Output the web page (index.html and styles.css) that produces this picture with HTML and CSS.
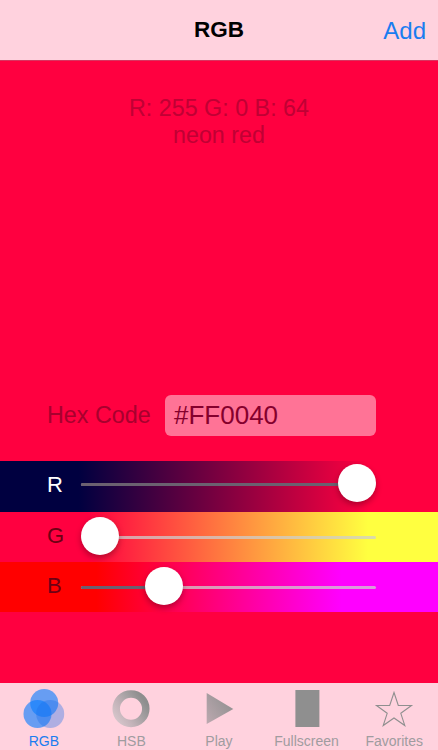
FILE: index.html
```html
<!DOCTYPE html>
<html lang="en">
<head>
<meta charset="utf-8">
<title>RGB</title>
<link rel="stylesheet" href="styles.css">
</head>
<body>
<div class="app">
  <header class="navbar">
    <div class="nav-title">RGB</div>
    <div class="nav-add">Add</div>
  </header>
  <main class="canvas">
    <div class="readout">
      <div>R: 255 G: 0 B: 64</div>
      <div>neon red</div>
    </div>
    <div class="hex-row">
      <span class="hex-label">Hex Code</span>
      <div class="hex-field">#FF0040</div>
    </div>
    <section class="sliders">
      <div class="slider-row row-r">
        <span class="channel channel-light">R</span>
        <div class="track"><div class="fill" style="width:94%"></div><div class="thumb" style="left:257px"></div></div>
      </div>
      <div class="slider-row row-g">
        <span class="channel">G</span>
        <div class="track"><div class="fill" style="width:0"></div><div class="thumb" style="left:-0.5px"></div></div>
      </div>
      <div class="slider-row row-b">
        <span class="channel">B</span>
        <div class="track"><div class="fill" style="width:25%"></div><div class="thumb" style="left:63.5px"></div></div>
      </div>
    </section>
  </main>
  <nav class="tabbar">
    <div class="tab tab-active">
      <svg class="icon" viewBox="0 0 44 44" width="44" height="44">
        <circle cx="22.200" cy="16" r="14" fill="#0a7cff" fill-opacity=".62"/>
        <circle cx="15.500" cy="27" r="14" fill="#0a7cff" fill-opacity=".62"/>
        <circle cx="28.200" cy="27" r="14" fill="#1f6fe8" fill-opacity=".36"/>
      </svg>
      <span>RGB</span>
    </div>
    <div class="tab">
      <svg class="icon" viewBox="0 0 44 44" width="44" height="44">
        <defs><linearGradient id="ring" x1="0" y1="1" x2="1" y2="0.300"><stop offset="0" stop-color="#d8c8cd"/><stop offset=".35" stop-color="#c4b4ba"/><stop offset=".7" stop-color="#a5a0a2"/><stop offset="1" stop-color="#8e8e8e"/></linearGradient></defs>
        <circle cx="22" cy="21.700" r="14.800" fill="none" stroke="url(#ring)" stroke-width="7.500"/>
      </svg>
      <span>HSB</span>
    </div>
    <div class="tab">
      <svg class="icon" viewBox="0 0 44 44" width="44" height="44">
        <defs><linearGradient id="play" x1="0" y1="1" x2="1" y2="0.200"><stop offset="0" stop-color="#bda9b0"/><stop offset="1" stop-color="#8f8f8f"/></linearGradient></defs>
        <path d="M9.700 6 L36.300 22 L9.700 37 Z" fill="url(#play)"/>
      </svg>
      <span>Play</span>
    </div>
    <div class="tab">
      <svg class="icon" viewBox="0 0 44 44" width="44" height="44">
        <rect x="10.400" y="3" width="24" height="37" fill="#8f8f8f"/>
      </svg>
      <span>Fullscreen</span>
    </div>
    <div class="tab">
      <svg class="icon" viewBox="0 0 44 44" width="44" height="44">
        <path d="M22 5.500 L26.300 18.500 L39.500 18.500 L28.800 26.300 L32.800 38.500 L22 31 L11.200 38.500 L15.200 26.300 L4.500 18.500 L17.700 18.500 Z" fill="none" stroke="#8f8f8f" stroke-width="1.100"/>
      </svg>
      <span>Favorites</span>
    </div>
  </nav>
</div>
</body>
</html>
```
FILE: styles.css
```css
* { box-sizing: border-box; }
html, body { margin: 0; padding: 0; }
body { font-family: "Liberation Sans", Arial, sans-serif; }
.app { width: 438px; height: 750px; display: flex; flex-direction: column; overflow: hidden; background: #ff0040; }
.navbar { height: 60.500px; flex: none; background: #ffd2de; border-bottom: 1px solid #d9345f; display: grid; grid-template-columns: 1fr auto 1fr; align-items: center; padding: 0 12px; }
.nav-title { grid-column: 2; font-size: 22.500px; font-weight: 700; color: #000; }
.nav-add { grid-column: 3; justify-self: end; font-size: 24px; color: #1a7df0; padding-top: 2px; }
.canvas { flex: 1; display: flex; flex-direction: column; }
.readout { margin-top: 34px; height: 300px; text-align: center; font-size: 23.300px; line-height: 27px; color: #c00034; }
.hex-row { display: flex; align-items: center; height: 41px; padding-left: 47px; }
.hex-label { width: 118px; font-size: 23.300px; color: #a8002e; }
.hex-field { width: 211px; height: 41px; background: #ff7396; border-radius: 6px; padding-left: 9px; font-size: 26px; line-height: 41px; color: #85002d; }
.sliders { margin-top: 25.500px; }
.slider-row { height: 50px; display: flex; align-items: center; position: relative; }
.row-r { height: 51px; background: linear-gradient(to right, #000040 18%, #ff0040 84%); }
.row-r .track { margin-bottom: 4px; }
.row-r .channel { padding-bottom: 4px; }
.row-g { background: linear-gradient(to right, #ff0040 20%, #ffff40 84%); }
.row-g .channel, .row-b .channel { padding-bottom: 2px; }
.row-b { background: linear-gradient(to right, #ff0000 22%, #ff00ff 78%); }
.channel { width: 81px; padding-left: 47px; font-size: 22px; color: #6e0014; }
.channel-light { color: #fff; }
.track { position: relative; width: 295px; height: 3px; background: rgba(205, 205, 205, .75); border-radius: 2px; }
.fill { height: 100%; background: #6b6070; border-radius: 2px; }
.thumb { position: absolute; top: -19px; width: 38px; height: 38px; border-radius: 50%; background: #fff; box-shadow: 0 3px 6px rgba(0,0,0,.3); }
.tabbar { margin-top: auto; height: 67px; flex: none; background: #ffd2de; display: flex; }
.tab { flex: 1 1 0; display: flex; flex-direction: column; align-items: center; padding-top: 4px; font-size: 14px; color: #a09ca0; white-space: nowrap; }
.tab span { margin-top: 2px; line-height: 17px; }
.tab-active { color: #1a7df0; }
.icon { display: block; }
```
